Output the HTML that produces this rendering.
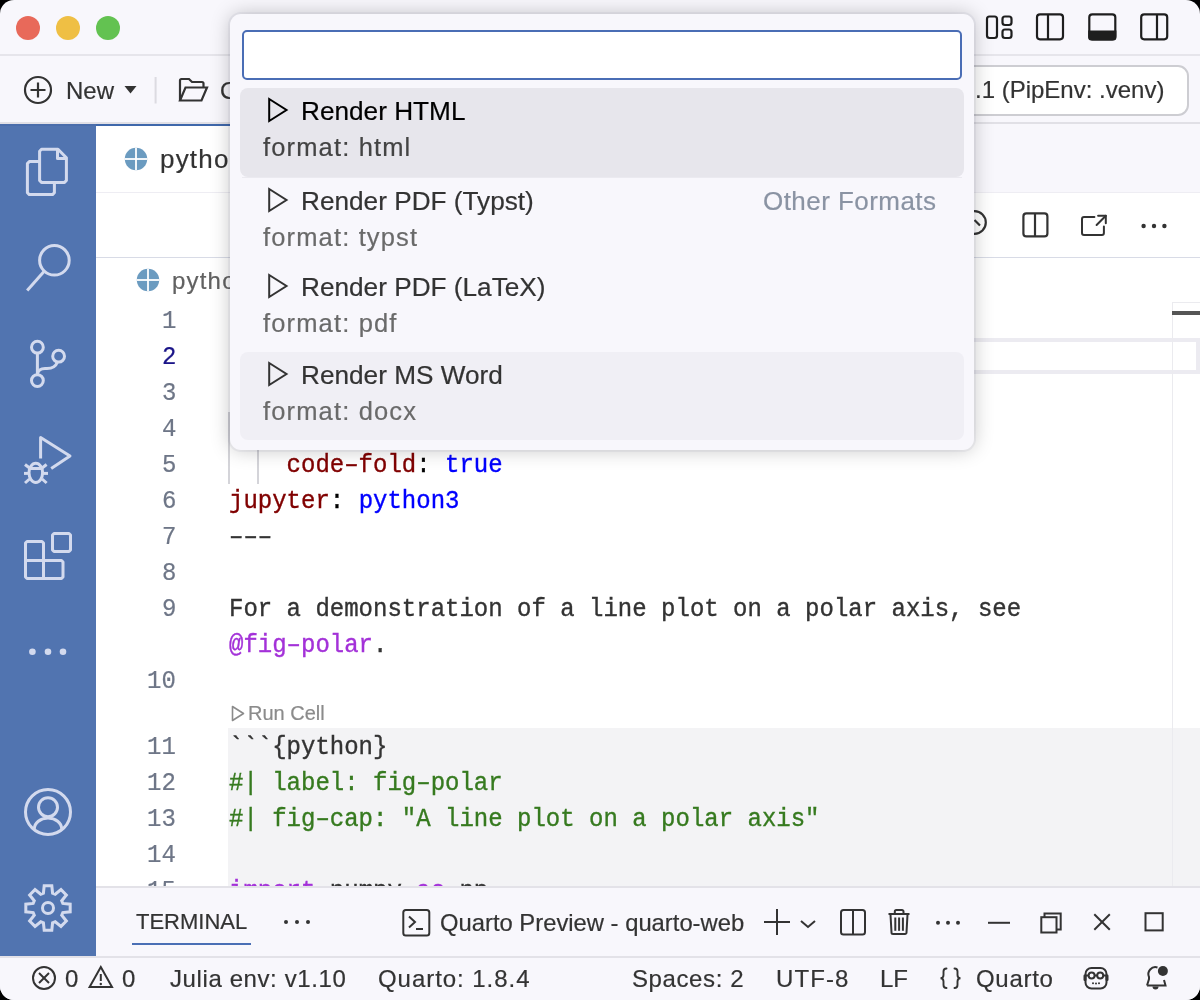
<!DOCTYPE html>
<html><head><meta charset="utf-8">
<style>
html,body{margin:0;padding:0;width:1200px;height:1000px;overflow:hidden;background:#000;}
*{box-sizing:border-box;}
.win{position:absolute;left:0;top:0;width:1200px;height:1000px;border-radius:14px;overflow:hidden;background:#f8f7fc;font-family:"Liberation Sans",sans-serif;color:#333;}
.abs{position:absolute;}
.t{position:absolute;white-space:pre;line-height:1;will-change:transform;-webkit-text-stroke:0.2px currentColor;}
svg{position:absolute;overflow:visible;}
</style></head><body>
<div class="win">
<div class="abs" style="left:16px;top:16px;width:24px;height:24px;border-radius:50%;background:#e8695a"></div>
<div class="abs" style="left:56px;top:16px;width:24px;height:24px;border-radius:50%;background:#efbf44"></div>
<div class="abs" style="left:96px;top:16px;width:24px;height:24px;border-radius:50%;background:#63c251"></div>
<div class="abs" style="left:0px;top:54px;width:1200px;height:2px;background:#e6e5eb;"></div>
<div class="abs" style="left:0px;top:122px;width:1200px;height:2px;background:#e1e0e6;"></div>
<svg style="left:0px;top:0px" width="1200" height="1000" viewBox="0 0 1200 1000"><g fill="none" stroke="#1e1e1e" stroke-width="2.2">
<rect x="987" y="16.5" width="10" height="21.5" rx="2.5"/>
<rect x="1002.5" y="16.5" width="9" height="8.5" rx="2.5"/>
<rect x="1002.5" y="29.5" width="9" height="8.5" rx="2.5"/>
<rect x="1037" y="14.3" width="26" height="25" rx="3"/><line x1="1048" y1="14.3" x2="1048" y2="39.3"/>
<rect x="1089.3" y="14.3" width="26" height="25" rx="3"/>
<rect x="1141.2" y="14.3" width="26" height="25" rx="3"/><line x1="1157" y1="14.3" x2="1157" y2="39.3"/>
</g>
<path d="M1088.2 30.5 H1116.4 V37.5 a3 3 0 0 1 -3 3 H1091.2 a3 3 0 0 1 -3 -3 Z" fill="#1e1e1e"/></svg>
<svg style="left:0px;top:0px" width="1200" height="1000" viewBox="0 0 1200 1000"><g fill="none" stroke="#333" stroke-width="2.2">
<circle cx="38" cy="90" r="13"/><line x1="38" y1="82.5" x2="38" y2="97.5"/><line x1="30.5" y1="90" x2="45.5" y2="90"/>
<path d="M180 100.5 V80.5 a1.5 1.5 0 0 1 1.5 -1.5 H189 l3 3 H202 a1.5 1.5 0 0 1 1.5 1.5 V87"/>
<path d="M180 100.5 L185.5 87.5 H207 L201.5 100.5 Z"/>
</g>
<path d="M124.5 86 H136.5 L130.5 93.5 Z" fill="#333"/>
<line x1="155.6" y1="77" x2="155.6" y2="103.5" stroke="#dcdbe1" stroke-width="2"/></svg>
<div class="t" style="left:65.80px;top:78.68px;font-size:24px;font-family:'Liberation Sans',sans-serif;color:#333333;">New</div>
<div class="t" style="left:220.00px;top:78.68px;font-size:24px;font-family:'Liberation Sans',sans-serif;color:#333333;">Open</div>
<div class="abs" style="left:700px;top:64.5px;width:489px;height:51px;background:#fff;border:2px solid #cdcdd2;border-radius:11px"></div>
<div class="t" style="left:975.00px;top:77.68px;font-size:24px;font-family:'Liberation Sans',sans-serif;color:#333333;">.1 (PipEnv: .venv)</div>
<div class="abs" style="left:0px;top:124px;width:96px;height:832px;background:#5174b0;"></div>
<div class="abs" style="left:0px;top:124px;width:96px;height:2px;background:#4a6dab;"></div>
<svg style="left:0px;top:0px" width="1200" height="1000" viewBox="0 0 1200 1000"><g fill="none" stroke="#d3daee" stroke-width="3" stroke-linejoin="round">
<path d="M41.5 149.3 H58 L66.4 157.7 V180.5 L64.5 182.4 H41.5 L39.6 180.5 V151.2 Z"/>
<path d="M57.5 149.3 V158.5 H66.4"/>
<path d="M39.6 161.6 H29.3 L27.4 163.5 V192.7 L29.3 194.6 H52.5 L54.4 192.7 V182.4"/>
<circle cx="54.4" cy="260.3" r="14.8"/><line x1="44" y1="271.5" x2="27.2" y2="290.4"/>
<circle cx="37.4" cy="347.2" r="5.9"/><circle cx="58.6" cy="356.2" r="5.9"/><circle cx="37.4" cy="380.6" r="5.9"/>
<line x1="37.4" y1="353" x2="37.4" y2="374.7"/>
<path d="M57.5 362 Q55 368.5 47 368.5 H45 Q38.5 368.5 37.4 374"/>
<path d="M40.6 458.5 V437.5 L70 456 L51.2 468.4"/>
<ellipse cx="35.8" cy="472.8" rx="6.8" ry="9.6"/>
<line x1="29" y1="468.5" x2="42.6" y2="468.5"/>
<line x1="24" y1="473.4" x2="29" y2="473.4"/><line x1="42.6" y1="473.4" x2="48" y2="473.4"/>
<line x1="25" y1="464.5" x2="29.5" y2="468"/><line x1="46.6" y1="464.5" x2="42.1" y2="468"/>
<line x1="25" y1="483" x2="29.5" y2="479"/><line x1="46.6" y1="483" x2="42.1" y2="479"/>
<path d="M25.5 543 L27 541.5 H42 L43.5 543 V560.5 H61.5 L63 562 V577 L61.5 578.5 H27 L25.5 577 Z"/>
<line x1="25.5" y1="560.5" x2="43.5" y2="560.5"/><line x1="43.5" y1="560.5" x2="43.5" y2="578.5"/>
<path d="M52.5 535 L54 533.5 H69 L70.5 535 V550 L69 551.5 H54 L52.5 550 Z"/>
<circle cx="48" cy="812" r="22.5"/><circle cx="48" cy="807.2" r="9.5"/>
<path d="M34.3 829 A13.7 11 0 0 1 61.7 829"/>
<circle cx="48" cy="908" r="5.5"/>
</g>
<g fill="#d3daee"><circle cx="32.4" cy="651.7" r="3.3"/><circle cx="48" cy="651.7" r="3.3"/><circle cx="63" cy="651.7" r="3.3"/></g></svg>
<svg style="left:0px;top:0px" width="1200" height="1000" viewBox="0 0 1200 1000"><path d="M43.42 893.19 L44.19 885.82 L51.81 885.82 L52.58 893.19 L55.23 894.29 L60.99 889.63 L66.37 895.01 L61.71 900.77 L62.81 903.42 L70.18 904.19 L70.18 911.81 L62.81 912.58 L61.71 915.23 L66.37 920.99 L60.99 926.37 L55.23 921.71 L52.58 922.81 L51.81 930.18 L44.19 930.18 L43.42 922.81 L40.77 921.71 L35.01 926.37 L29.63 920.99 L34.29 915.23 L33.19 912.58 L25.82 911.81 L25.82 904.19 L33.19 903.42 L34.29 900.77 L29.63 895.01 L35.01 889.63 L40.77 894.29 Z" fill="none" stroke="#d3daee" stroke-width="3" stroke-linejoin="miter"/></svg>
<div class="abs" style="left:96px;top:124px;width:800px;height:69px;background:#fff;"></div>
<div class="abs" style="left:96px;top:124px;width:800px;height:2px;background:#3f68ab;"></div>
<div class="abs" style="left:96px;top:192px;width:1104px;height:1px;background:#eeedf3;"></div>
<div class="abs" style="left:96px;top:193px;width:1104px;height:64px;background:#fff;"></div>
<div class="abs" style="left:96px;top:257px;width:1104px;height:1px;background:#d8dbe6;"></div>
<div class="abs" style="left:96px;top:258px;width:1104px;height:628px;background:#fff;"></div>
<svg style="left:0px;top:0px" width="1200" height="1000" viewBox="0 0 1200 1000"><circle cx="136" cy="159" r="11.2" fill="#6b9bc0"/><line x1="136" y1="147.8" x2="136" y2="170.2" stroke="#fff" stroke-width="1.8"/><line x1="124.8" y1="159" x2="147.2" y2="159" stroke="#fff" stroke-width="1.8"/><circle cx="148" cy="280" r="11.2" fill="#6b9bc0"/><line x1="148" y1="268.8" x2="148" y2="291.2" stroke="#fff" stroke-width="1.8"/><line x1="136.8" y1="280" x2="159.2" y2="280" stroke="#fff" stroke-width="1.8"/></svg>
<div class="t" style="left:160.00px;top:145.99px;font-size:26px;font-family:'Liberation Sans',sans-serif;color:#333333;letter-spacing:1.2px;">python-basics.qmd</div>
<div class="t" style="left:171.50px;top:268.68px;font-size:24px;font-family:'Liberation Sans',sans-serif;color:#616161;letter-spacing:1.2px;">python-basics.qmd</div>
<svg style="left:0px;top:0px" width="1200" height="1000" viewBox="0 0 1200 1000"><g fill="none" stroke="#333" stroke-width="2.2">
<circle cx="974.5" cy="222.5" r="11.3"/><line x1="974.5" y1="220" x2="980" y2="225.5"/>
<rect x="1023.4" y="213.4" width="24" height="23" rx="3"/><line x1="1035" y1="213.4" x2="1035" y2="236.4"/>
<g stroke-linecap="round" stroke-linejoin="round" stroke-width="2"><path d="M1094.4 216.9 H1084 a2 2 0 0 0 -2 2 V232.9 a2 2 0 0 0 2 2 H1101.9 a2 2 0 0 0 2 -2 V226.5"/>
<path d="M1096.6 225 L1105.8 215.8"/><path d="M1098.1 215.8 H1105.8 V223.3"/></g>
</g>
<g fill="#333"><circle cx="1143.6" cy="226" r="2.2"/><circle cx="1154" cy="226" r="2.2"/><circle cx="1164.4" cy="226" r="2.2"/></g></svg>
<div class="abs" style="left:231px;top:338px;width:969px;height:36px;background:transparent;border:4px solid #ecebf1;border-left:none"></div>
<div class="abs" style="left:228px;top:728px;width:972px;height:158px;background:#f3f3f5;"></div>
<div class="abs" style="left:1172px;top:302px;width:1px;height:584px;background:#ebebef;"></div>
<div class="abs" style="left:1172px;top:302px;width:28px;height:1px;background:#ebebef;"></div>
<div class="abs" style="left:1172px;top:311px;width:28px;height:4px;background:#555555;"></div>
<div class="t" style="right:1024.00px;top:309.61px;font-size:24px;font-family:'Liberation Mono',monospace;color:#6e7687;text-align:right;transform:scaleY(1.1);transform-origin:0 18.4px;">1</div>
<div class="t" style="left:229px;top:309.61px;font-size:24px;font-family:'Liberation Mono',monospace;color:#333;-webkit-text-stroke:0.35px currentColor;transform:scaleY(1.1);transform-origin:0 18.4px"><span style="color:#333333">–––</span></div>
<div class="t" style="right:1024.00px;top:345.61px;font-size:24px;font-family:'Liberation Mono',monospace;color:#1a1488;text-align:right;transform:scaleY(1.1);transform-origin:0 18.4px;">2</div>
<div class="t" style="left:229px;top:345.61px;font-size:24px;font-family:'Liberation Mono',monospace;color:#333;-webkit-text-stroke:0.35px currentColor;transform:scaleY(1.1);transform-origin:0 18.4px"><span style="color:#333333">title: "Python Basics"</span></div>
<div class="t" style="right:1024.00px;top:381.61px;font-size:24px;font-family:'Liberation Mono',monospace;color:#6e7687;text-align:right;transform:scaleY(1.1);transform-origin:0 18.4px;">3</div>
<div class="t" style="left:229px;top:381.61px;font-size:24px;font-family:'Liberation Mono',monospace;color:#333;-webkit-text-stroke:0.35px currentColor;transform:scaleY(1.1);transform-origin:0 18.4px"><span style="color:#800000">format:</span></div>
<div class="t" style="right:1024.00px;top:417.61px;font-size:24px;font-family:'Liberation Mono',monospace;color:#6e7687;text-align:right;transform:scaleY(1.1);transform-origin:0 18.4px;">4</div>
<div class="t" style="left:229px;top:417.61px;font-size:24px;font-family:'Liberation Mono',monospace;color:#333;-webkit-text-stroke:0.35px currentColor;transform:scaleY(1.1);transform-origin:0 18.4px"><span style="color:#800000">  html:</span></div>
<div class="t" style="right:1024.00px;top:453.61px;font-size:24px;font-family:'Liberation Mono',monospace;color:#6e7687;text-align:right;transform:scaleY(1.1);transform-origin:0 18.4px;">5</div>
<div class="t" style="left:229px;top:453.61px;font-size:24px;font-family:'Liberation Mono',monospace;color:#333;-webkit-text-stroke:0.35px currentColor;transform:scaleY(1.1);transform-origin:0 18.4px"><span style="color:#800000">    code–fold</span><span style="color:#000">: </span><span style="color:#0000ff">true</span></div>
<div class="t" style="right:1024.00px;top:489.61px;font-size:24px;font-family:'Liberation Mono',monospace;color:#6e7687;text-align:right;transform:scaleY(1.1);transform-origin:0 18.4px;">6</div>
<div class="t" style="left:229px;top:489.61px;font-size:24px;font-family:'Liberation Mono',monospace;color:#333;-webkit-text-stroke:0.35px currentColor;transform:scaleY(1.1);transform-origin:0 18.4px"><span style="color:#800000">jupyter</span><span style="color:#000">: </span><span style="color:#0000ff">python3</span></div>
<div class="t" style="right:1024.00px;top:525.61px;font-size:24px;font-family:'Liberation Mono',monospace;color:#6e7687;text-align:right;transform:scaleY(1.1);transform-origin:0 18.4px;">7</div>
<div class="t" style="left:229px;top:525.61px;font-size:24px;font-family:'Liberation Mono',monospace;color:#333;-webkit-text-stroke:0.35px currentColor;transform:scaleY(1.1);transform-origin:0 18.4px"><span style="color:#333333">–––</span></div>
<div class="t" style="right:1024.00px;top:561.61px;font-size:24px;font-family:'Liberation Mono',monospace;color:#6e7687;text-align:right;transform:scaleY(1.1);transform-origin:0 18.4px;">8</div>
<div class="t" style="right:1024.00px;top:597.61px;font-size:24px;font-family:'Liberation Mono',monospace;color:#6e7687;text-align:right;transform:scaleY(1.1);transform-origin:0 18.4px;">9</div>
<div class="t" style="left:229px;top:597.61px;font-size:24px;font-family:'Liberation Mono',monospace;color:#333;-webkit-text-stroke:0.35px currentColor;transform:scaleY(1.1);transform-origin:0 18.4px"><span style="color:#333333">For a demonstration of a line plot on a polar axis, see</span></div>
<div class="t" style="left:229px;top:633.61px;font-size:24px;font-family:'Liberation Mono',monospace;color:#333;-webkit-text-stroke:0.35px currentColor;transform:scaleY(1.1);transform-origin:0 18.4px"><span style="color:#a331d8">@fig–polar</span><span style="color:#333333">.</span></div>
<div class="t" style="right:1024.00px;top:669.61px;font-size:24px;font-family:'Liberation Mono',monospace;color:#6e7687;text-align:right;transform:scaleY(1.1);transform-origin:0 18.4px;">10</div>
<div class="t" style="right:1024.00px;top:735.61px;font-size:24px;font-family:'Liberation Mono',monospace;color:#6e7687;text-align:right;transform:scaleY(1.1);transform-origin:0 18.4px;">11</div>
<div class="t" style="left:229px;top:735.61px;font-size:24px;font-family:'Liberation Mono',monospace;color:#333;-webkit-text-stroke:0.35px currentColor;transform:scaleY(1.1);transform-origin:0 18.4px"><span style="color:#333333">```{python}</span></div>
<div class="t" style="right:1024.00px;top:771.61px;font-size:24px;font-family:'Liberation Mono',monospace;color:#6e7687;text-align:right;transform:scaleY(1.1);transform-origin:0 18.4px;">12</div>
<div class="t" style="left:229px;top:771.61px;font-size:24px;font-family:'Liberation Mono',monospace;color:#333;-webkit-text-stroke:0.35px currentColor;transform:scaleY(1.1);transform-origin:0 18.4px"><span style="color:#367a1f">#| label: fig–polar</span></div>
<div class="t" style="right:1024.00px;top:807.61px;font-size:24px;font-family:'Liberation Mono',monospace;color:#6e7687;text-align:right;transform:scaleY(1.1);transform-origin:0 18.4px;">13</div>
<div class="t" style="left:229px;top:807.61px;font-size:24px;font-family:'Liberation Mono',monospace;color:#333;-webkit-text-stroke:0.35px currentColor;transform:scaleY(1.1);transform-origin:0 18.4px"><span style="color:#367a1f">#| fig–cap: "A line plot on a polar axis"</span></div>
<div class="t" style="right:1024.00px;top:843.61px;font-size:24px;font-family:'Liberation Mono',monospace;color:#6e7687;text-align:right;transform:scaleY(1.1);transform-origin:0 18.4px;">14</div>
<div class="t" style="right:1024.00px;top:879.61px;font-size:24px;font-family:'Liberation Mono',monospace;color:#6e7687;text-align:right;transform:scaleY(1.1);transform-origin:0 18.4px;">15</div>
<div class="t" style="left:229px;top:879.61px;font-size:24px;font-family:'Liberation Mono',monospace;color:#333;-webkit-text-stroke:0.35px currentColor;transform:scaleY(1.1);transform-origin:0 18.4px"><span style="color:#a331d8">import</span><span style="color:#333333"> numpy </span><span style="color:#a331d8">as</span><span style="color:#333333"> np</span></div>
<div class="abs" style="left:228px;top:411.6px;width:2px;height:72px;background:#d4d4d9;"></div>
<div class="abs" style="left:257px;top:447.6px;width:2px;height:36px;background:#d4d4d9;"></div>
<svg style="left:0px;top:0px" width="1200" height="1000" viewBox="0 0 1200 1000"><path d="M232.5 706.5 L243.5 713.5 L232.5 720.5 Z" fill="none" stroke="#8b8b8b" stroke-width="1.6" stroke-linejoin="round"/></svg>
<div class="t" style="left:248.00px;top:703.07px;font-size:20px;font-family:'Liberation Sans',sans-serif;color:#8b8b8b;">Run Cell</div>
<div class="abs" style="left:96px;top:886px;width:1104px;height:70px;background:#f8f7fc;"></div>
<div class="abs" style="left:96px;top:886px;width:1104px;height:2px;background:#e3e2e8;"></div>
<div class="t" style="left:136.00px;top:911.37px;font-size:22px;font-family:'Liberation Sans',sans-serif;color:#333333;">TERMINAL</div>
<div class="abs" style="left:132px;top:943px;width:119px;height:2px;background:#4a6fb5;"></div>
<svg style="left:0px;top:0px" width="1200" height="1000" viewBox="0 0 1200 1000"><g fill="#333"><circle cx="286" cy="922" r="2"/><circle cx="297" cy="922" r="2"/><circle cx="308" cy="922" r="2"/></g></svg>
<svg style="left:0px;top:0px" width="1200" height="1000" viewBox="0 0 1200 1000"><g fill="none" stroke="#333" stroke-width="2">
<rect x="403.3" y="909.9" width="26" height="25.5" rx="2.5"/>
<path d="M409 916.5 L415 922 L409 927.5"/><line x1="416" y1="929" x2="423" y2="929"/>
<line x1="764" y1="922" x2="790" y2="922"/><line x1="777" y1="909" x2="777" y2="935"/>
<path d="M801 921 L808 927 L815 921"/>
<rect x="841" y="910" width="24" height="24.5" rx="2.5"/><line x1="853" y1="910" x2="853" y2="934.5"/>
<path d="M888.5 914 H909.5 M894.8 914 V911.5 a1.5 1.5 0 0 1 1.5 -1.5 H902 a1.5 1.5 0 0 1 1.5 1.5 V914"/>
<path d="M890.5 914.5 L891.5 932.5 a1.5 1.5 0 0 0 1.5 1.5 H905 a1.5 1.5 0 0 0 1.5 -1.5 L907.5 914.5"/>
<line x1="895.3" y1="917.5" x2="895.3" y2="930.8"/><line x1="899.1" y1="917.5" x2="899.1" y2="930.8"/><line x1="902.9" y1="917.5" x2="902.9" y2="930.8"/>
<line x1="988" y1="922.8" x2="1010" y2="922.8"/>
<rect x="1041.3" y="917.2" width="15.2" height="15.3"/><path d="M1044.5 917.2 V913.5 H1060.7 V929.5 H1056.5"/>
<line x1="1094.3" y1="914.3" x2="1109.8" y2="929.7"/><line x1="1109.8" y1="914.3" x2="1094.3" y2="929.7"/>
<rect x="1145.5" y="913.2" width="17.2" height="17.2"/>
</g>
<g fill="#333"><circle cx="938" cy="922.7" r="2"/><circle cx="948" cy="922.7" r="2"/><circle cx="958" cy="922.7" r="2"/></g></svg>
<div class="t" style="left:440.00px;top:910.85px;font-size:23.8px;font-family:'Liberation Sans',sans-serif;color:#333333;">Quarto Preview - quarto-web</div>
<div class="abs" style="left:0px;top:956px;width:1200px;height:44px;background:#f8f7fc;"></div>
<div class="abs" style="left:0px;top:956px;width:1200px;height:2px;background:#e3e2e8;"></div>
<svg style="left:0px;top:0px" width="1200" height="1000" viewBox="0 0 1200 1000"><g fill="none" stroke="#333" stroke-width="2">
<circle cx="44" cy="978" r="11"/><line x1="39" y1="973" x2="49" y2="983"/><line x1="49" y1="973" x2="39" y2="983"/>
<path d="M100.8 967 L112 987 H89.6 Z" stroke-linejoin="miter"/>
<rect x="1085.5" y="968" width="21" height="20.5" rx="6"/>
<circle cx="1091.6" cy="975.5" r="3"/><circle cx="1100.2" cy="975.5" r="3"/><line x1="1094.6" y1="975.5" x2="1097.2" y2="975.5"/><line x1="1085.5" y1="975.5" x2="1088.6" y2="975.5"/><line x1="1103.2" y1="975.5" x2="1106.5" y2="975.5"/>
<path d="M1147 985.5 L1149 979 V977 a7 7 0 0 1 8.5 -9.5 M1164 980 L1165.5 985.5 H1147"/>
</g>
<line x1="100.8" y1="974" x2="100.8" y2="981" stroke="#333" stroke-width="2"/><circle cx="100.8" cy="984" r="1.2" fill="#333"/>
<g fill="#333"><rect x="1083.5" y="974.5" width="3" height="6.5" rx="1.2"/><rect x="1105.5" y="974.5" width="3" height="6.5" rx="1.2"/>
<circle cx="1093" cy="983.3" r="1"/><circle cx="1096" cy="983.6" r="1"/><circle cx="1099" cy="983.3" r="1"/>
<circle cx="1162.9" cy="971" r="5"/><path d="M1152.5 986.5 a3 3 0 0 0 6 0 Z"/></g></svg>
<div class="t" style="left:65.00px;top:966.68px;font-size:24px;font-family:'Liberation Sans',sans-serif;color:#333333;">0</div>
<div class="t" style="left:122.00px;top:966.68px;font-size:24px;font-family:'Liberation Sans',sans-serif;color:#333333;">0</div>
<div class="t" style="left:170.00px;top:966.68px;font-size:24px;font-family:'Liberation Sans',sans-serif;color:#333333;letter-spacing:0.6px;">Julia env: v1.10</div>
<div class="t" style="left:378.00px;top:966.68px;font-size:24px;font-family:'Liberation Sans',sans-serif;color:#333333;letter-spacing:0.95px;">Quarto: 1.8.4</div>
<div class="t" style="left:631.50px;top:966.68px;font-size:24px;font-family:'Liberation Sans',sans-serif;color:#333333;letter-spacing:0.6px;">Spaces: 2</div>
<div class="t" style="left:775.50px;top:966.68px;font-size:24px;font-family:'Liberation Sans',sans-serif;color:#333333;letter-spacing:1.1px;">UTF-8</div>
<div class="t" style="left:880.00px;top:966.68px;font-size:24px;font-family:'Liberation Sans',sans-serif;color:#333333;">LF</div>
<svg style="left:0px;top:0px" width="1200" height="1000" viewBox="0 0 1200 1000"><g fill="none" stroke="#333" stroke-width="1.9" stroke-linecap="round"><path d="M946.5 968.5 Q943.5 968.5 943.5 971.5 V975 Q943.5 978.2 940.5 978.2 Q943.5 978.2 943.5 981.5 V985 Q943.5 988 946.5 988"/><path d="M954.5 968.5 Q957.5 968.5 957.5 971.5 V975 Q957.5 978.2 960.5 978.2 Q957.5 978.2 957.5 981.5 V985 Q957.5 988 954.5 988"/></g></svg>
<div class="t" style="left:976.00px;top:966.68px;font-size:24px;font-family:'Liberation Sans',sans-serif;color:#333333;letter-spacing:0.7px;">Quarto</div>
<div class="abs" style="left:230px;top:14px;width:744px;height:436px;background:#f8f7fc;border-radius:11px;box-shadow:0 0 0 2px rgba(40,30,90,0.05), 0 0 20px rgba(0,0,0,0.23)"></div>
<div class="abs" style="left:242px;top:30px;width:720px;height:50px;background:#fff;border:2px solid #4a6db5;border-radius:5px"></div>
<div class="abs" style="left:240px;top:88px;width:724px;height:89px;background:#e7e6ec;border-radius:8px"></div>
<div class="abs" style="left:242px;top:176.5px;width:720px;height:1.5px;background:#ebeaf0;"></div>
<div class="abs" style="left:240px;top:352px;width:724px;height:88px;background:#f0eff5;border-radius:8px"></div>
<svg style="left:0px;top:0px" width="1200" height="1000" viewBox="0 0 1200 1000"><path d="M269.2 99.0 L286.5 110.0 L269.2 121.0 Z" fill="none" stroke="#000" stroke-width="2" stroke-linejoin="miter"/></svg>
<div class="t" style="left:300.50px;top:97.82px;font-size:26.2px;font-family:'Liberation Sans',sans-serif;color:#000;">Render HTML</div>
<div class="t" style="left:262.50px;top:135.41px;font-size:25.5px;font-family:'Liberation Sans',sans-serif;color:#444;letter-spacing:1.15px;">format: html</div>
<svg style="left:0px;top:0px" width="1200" height="1000" viewBox="0 0 1200 1000"><path d="M269.2 189.0 L286.5 200.0 L269.2 211.0 Z" fill="none" stroke="#333333" stroke-width="2" stroke-linejoin="miter"/></svg>
<div class="t" style="left:300.50px;top:187.82px;font-size:26.2px;font-family:'Liberation Sans',sans-serif;color:#333333;">Render PDF (Typst)</div>
<div class="t" style="left:262.50px;top:225.41px;font-size:25.5px;font-family:'Liberation Sans',sans-serif;color:#6a6a6a;letter-spacing:1.15px;">format: typst</div>
<svg style="left:0px;top:0px" width="1200" height="1000" viewBox="0 0 1200 1000"><path d="M269.2 275.0 L286.5 286.0 L269.2 297.0 Z" fill="none" stroke="#333333" stroke-width="2" stroke-linejoin="miter"/></svg>
<div class="t" style="left:300.50px;top:273.82px;font-size:26.2px;font-family:'Liberation Sans',sans-serif;color:#333333;">Render PDF (LaTeX)</div>
<div class="t" style="left:262.50px;top:311.41px;font-size:25.5px;font-family:'Liberation Sans',sans-serif;color:#6a6a6a;letter-spacing:1.15px;">format: pdf</div>
<svg style="left:0px;top:0px" width="1200" height="1000" viewBox="0 0 1200 1000"><path d="M269.2 363.0 L286.5 374.0 L269.2 385.0 Z" fill="none" stroke="#333333" stroke-width="2" stroke-linejoin="miter"/></svg>
<div class="t" style="left:300.50px;top:361.82px;font-size:26.2px;font-family:'Liberation Sans',sans-serif;color:#333333;">Render MS Word</div>
<div class="t" style="left:262.50px;top:399.41px;font-size:25.5px;font-family:'Liberation Sans',sans-serif;color:#6a6a6a;letter-spacing:1.15px;">format: docx</div>
<div class="t" style="right:264.00px;top:187.99px;font-size:26px;font-family:'Liberation Sans',sans-serif;color:#8a93a3;letter-spacing:0.45px;text-align:right;">Other Formats</div>
</div></body></html>
